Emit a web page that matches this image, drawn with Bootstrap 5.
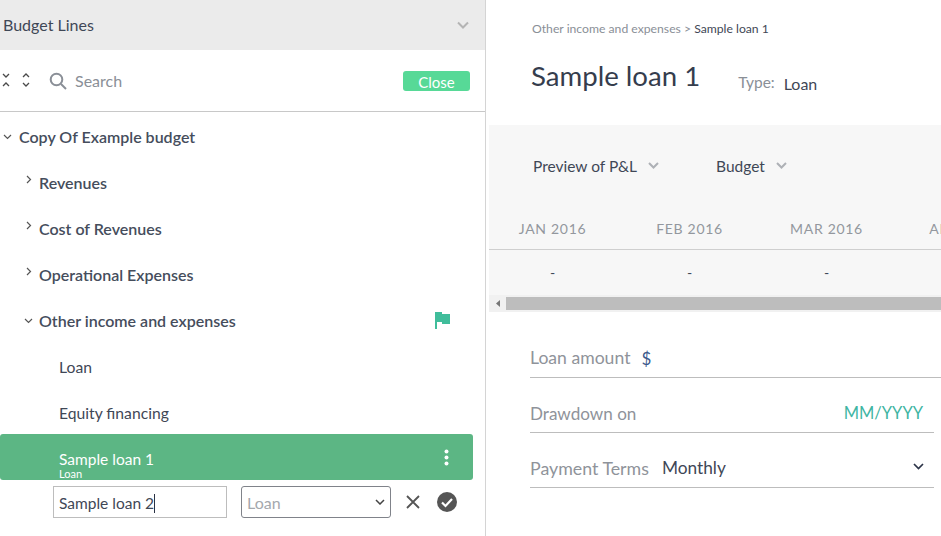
<!DOCTYPE html>
<html lang="en"><head><meta charset="utf-8"><title>Budget Lines</title>
<link href="https://cdn.jsdelivr.net/npm/bootstrap@5.3.0/dist/css/bootstrap.min.css" rel="stylesheet">
<style>
html,body{height:536px;overflow:hidden;background:#fff}
body{font-family:"Lato","Open Sans",sans-serif;color:#3f4756;font-size:16px}
.shell{height:536px;width:941px}
.side{width:486px;flex:none;border-right:1px solid #d4d4d4;height:536px}
.side-head{height:50px;background:#ebebeb;padding:0 16px 0 3px;font-size:16px;color:#3f4756}
.side-search{height:62px;border-bottom:1px solid #c8c8c8;padding:0 15px 0 2px}
.search-word{color:#8a8f97;font-size:16px;margin-left:8px}
.close-pill{background:#57d997;color:#fff;border:0;border-radius:3px;height:20px;width:67px;font-size:15px;line-height:22px;padding:0}
.tree-row{height:46px;font-size:15.7px;padding-right:35px;padding-top:6px}
.lvl0{padding-left:3px}.lvl1{padding-left:24px}.lvl2{padding-left:59px}
.tree-row.strong{font-weight:600;color:#454d5c;font-size:16px;padding-top:4px}
.lvl0 .tw-gap{margin-right:7px}
.tw-gap{margin-right:6px}
.tree-sel{height:46px;width:473px;background:#5cb684;color:#fff;border-radius:3px;padding:0 24px 0 59px;position:relative;font-size:15.5px}
.sel-lab{padding-top:6px}
.sel-sub{position:absolute;left:59px;top:33px;font-size:11px;line-height:13px}
.edit-row{padding:6px 0 0 53px}
.edit-name{width:174px;height:32px;border:1px solid #bdbdbd;padding:1px 5px 0;font-size:15.5px;color:#3f4756;line-height:30px}
.caret-mark{display:inline-block;width:1px;height:19px;background:#2a3244;vertical-align:-4px}
.edit-type{width:150px;height:32px;border:1px solid #80838a;border-radius:3px;margin-left:14px;padding:2px 5px 0;color:#a5a8ad;font-size:16px}
.main{flex:1;min-width:0;overflow:hidden}
.crumb{padding:21px 0 0 46px;font-size:12.2px;line-height:16px;color:#8a8f97}
.crumb b{font-weight:400;color:#3f4756}
.page-title{padding:15px 0 0 45px;height:88px}
.page-title h1{font-size:27.6px;font-weight:400;margin:0;line-height:48px;color:#353d4d}
.type-lab{color:#8a8f97;font-size:15.5px;margin-left:38px;margin-top:19px}
.type-val{font-size:16px;margin-left:9px;color:#3f4756;margin-top:20px}
.preview{margin-left:3px;background:#f7f7f7;height:187px;overflow:hidden}
.pick-row{height:84px;padding:0 0 0 44px;font-size:15.5px;color:#3f4756}
.pick-arrow{margin-left:11px;margin-bottom:3px}
.pick-gap{margin-right:57px}
.month-head{height:41px;border-bottom:1px solid #cfcfcf;color:#93979e;font-size:14px;letter-spacing:.7px;white-space:nowrap;margin-left:-5px;padding-bottom:2px}
.m-cell{width:137px;flex:none;text-align:center}
.m-vals{height:45px;color:#3f4756;font-size:14px;margin-left:-5px}
.hbar{height:17px;background:#f1f1f1;padding:2px 0}
.hbar-btn{width:17px;flex:none}
.hbar-thumb{flex:1;background:#bdbdbd}
.form-zone{padding:20px 7px 0 44px}
.f-row{height:55px;border-bottom:1px solid #bdbdbd;font-size:17.1px;padding-top:17px}
.f-first{margin-right:-7px;height:46px;padding-top:8px;font-size:17.6px}
.f-last{font-size:17.8px;padding-top:16px}
.f-lab{color:#8f939a}
.f-val{font-size:17.3px;margin-left:13px}
.dollar{color:#3b5a8c;margin-left:11px;font-size:17px}
.teal{color:#3fb5a3;font-size:16.500px;margin-right:11px}
.f-arrow{margin-right:10px;margin-bottom:4px}
</style></head><body>
<div class="shell d-flex">
 <aside class="side">
  <div class="side-head d-flex align-items-center justify-content-between">
   <span>Budget Lines</span>
   <svg width="12" height="8" viewBox="0 0 12 8" fill="none" stroke="#b4b4b4" stroke-width="2"><path d="M1 1.5l5 5 5-5"/></svg>
  </div>
  <div class="side-search d-flex align-items-center">
   <svg width="31" height="18" viewBox="0 0 31 18" fill="none" stroke="#4a4a4a" stroke-width="1.3"><path d="M1 2l3 3 3-3M1 14l3-3 3 3M21 5l3-3 3 3M21 11l3 3 3-3"/></svg>
   <svg class="ms-3" width="18" height="18" viewBox="0 0 18 18" fill="none" stroke="#8a8f97" stroke-width="2"><circle cx="7.5" cy="7.5" r="5.8"/><path d="M12 12l5 5"/></svg>
   <span class="search-word flex-grow-1">Search</span>
   <button class="close-pill" type="button">Close</button>
  </div>
  <div class="tree-row lvl0 strong d-flex align-items-center">
   <svg class="tw-gap" width="9" height="6" viewBox="0 0 9 6" fill="none" stroke="#555" stroke-width="1.2"><path d="M1 1l3.5 3.5L8 1"/></svg><span>Copy Of Example budget</span></div>
  <div class="tree-row lvl1 strong d-flex align-items-center">
   <svg class="tw-gap" width="9" height="12" viewBox="0 0 9 12" fill="none" stroke="#555" stroke-width="1.2" style="margin-bottom:6px"><path d="M3 2l3.5 3.5L3 9"/></svg><span>Revenues</span></div>
  <div class="tree-row lvl1 strong d-flex align-items-center">
   <svg class="tw-gap" width="9" height="12" viewBox="0 0 9 12" fill="none" stroke="#555" stroke-width="1.2" style="margin-bottom:6px"><path d="M3 2l3.5 3.5L3 9"/></svg><span>Cost of Revenues</span></div>
  <div class="tree-row lvl1 strong d-flex align-items-center">
   <svg class="tw-gap" width="9" height="12" viewBox="0 0 9 12" fill="none" stroke="#555" stroke-width="1.2" style="margin-bottom:6px"><path d="M3 2l3.5 3.5L3 9"/></svg><span>Operational Expenses</span></div>
  <div class="tree-row lvl1 strong d-flex align-items-center">
   <svg class="tw-gap" width="9" height="6" viewBox="0 0 9 6" fill="none" stroke="#555" stroke-width="1.2"><path d="M1 1l3.5 3.5L8 1"/></svg><span class="flex-grow-1">Other income and expenses</span>
   <svg width="15" height="17" viewBox="0 0 15 17" fill="#40bd9b" style="margin-bottom:1px"><path d="M0 0h7v2h8v10H7v-2H2v7H0z"/></svg></div>
  <div class="tree-row lvl2 d-flex align-items-center"><span>Loan</span></div>
  <div class="tree-row lvl2 d-flex align-items-center"><span>Equity financing</span></div>
  <div class="tree-sel d-flex align-items-center justify-content-between">
   <span class="sel-lab">Sample loan 1</span>
   <svg width="5" height="17" viewBox="0 0 5 17" fill="#fff"><circle cx="2.500" cy="2.500" r="2"/><circle cx="2.500" cy="8.500" r="2"/><circle cx="2.500" cy="14.500" r="2"/></svg>
   <span class="sel-sub">Loan</span>
  </div>
  <div class="edit-row d-flex align-items-center">
   <div class="edit-name">Sample loan 2<span class="caret-mark"></span></div>
   <div class="edit-type d-flex align-items-center justify-content-between"><span>Loan</span>
    <svg width="10" height="6" viewBox="0 0 10 6" fill="none" stroke="#444" stroke-width="1.5" style="margin-bottom:3px"><path d="M1 1l4 4 4-4"/></svg></div>
   <svg width="14" height="14" viewBox="0 0 14 14" fill="none" stroke="#555" stroke-width="1.800" style="margin:0 0 1px 15px"><path d="M1 1l12 12M13 1L1 13"/></svg>
   <svg width="20" height="20" viewBox="0 0 20 20" style="margin:0 0 1px 17px"><circle cx="10" cy="10" r="10" fill="#555"/><path d="M5 10.500l3.500 3.500L15 7" fill="none" stroke="#fff" stroke-width="2.200"/></svg>
  </div>
 </aside>
 <main class="main">
  <div class="crumb">Other income and expenses &gt; <b>Sample loan 1</b></div>
  <div class="page-title d-flex align-items-start">
   <h1>Sample loan 1</h1>
   <span class="type-lab">Type:</span><span class="type-val">Loan</span>
  </div>
  <section class="preview">
   <div class="pick-row d-flex align-items-center">
    <span>Preview of P&amp;L</span>
    <svg class="pick-arrow pick-gap" width="11" height="7" viewBox="0 0 11 7" fill="none" stroke="#aeb1b6" stroke-width="2"><path d="M1 1l4.500 4.500L10 1"/></svg>
    <span>Budget</span>
    <svg class="pick-arrow" width="11" height="7" viewBox="0 0 11 7" fill="none" stroke="#aeb1b6" stroke-width="2"><path d="M1 1l4.500 4.500L10 1"/></svg>
   </div>
   <div class="month-head d-flex align-items-center">
    <div class="m-cell">JAN 2016</div><div class="m-cell">FEB 2016</div><div class="m-cell">MAR 2016</div><div class="m-cell">APR 2016</div>
   </div>
   <div class="m-vals d-flex align-items-center">
    <div class="m-cell">-</div><div class="m-cell">-</div><div class="m-cell">-</div><div class="m-cell">-</div>
   </div>
   <div class="hbar d-flex">
    <div class="hbar-btn d-flex align-items-center justify-content-center"><svg width="4" height="7" viewBox="0 0 4 7" fill="#777"><path d="M4 0v7L0 3.500z"/></svg></div>
    <div class="hbar-thumb"></div>
   </div>
  </section>
  <div class="form-zone">
   <div class="f-row f-first d-flex align-items-center"><span class="f-lab">Loan amount</span><span class="dollar">$</span></div>
   <div class="f-row d-flex align-items-center justify-content-between"><span class="f-lab">Drawdown on</span><span class="teal">MM/YYYY</span></div>
   <div class="f-row f-last d-flex align-items-center"><span class="f-lab">Payment Terms</span><span class="f-val flex-grow-1">Monthly</span>
    <svg class="f-arrow" width="11" height="7" viewBox="0 0 11 7" fill="none" stroke="#2c3448" stroke-width="1.700"><path d="M1 1l4.500 4.500L10 1"/></svg></div>
  </div>
 </main>
</div>
<script src="https://cdn.jsdelivr.net/npm/bootstrap@5.3.0/dist/js/bootstrap.bundle.min.js"></script>
</body></html>
